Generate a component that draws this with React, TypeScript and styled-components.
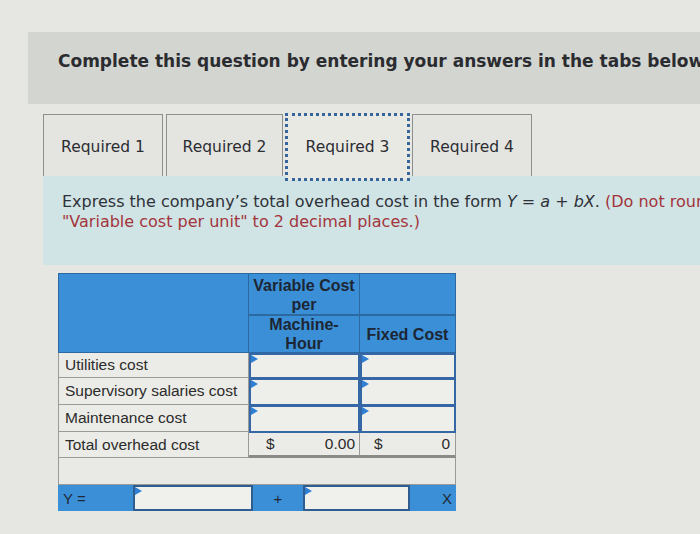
import React from "react";
import styled, { createGlobalStyle, css } from "styled-components";

const Global = createGlobalStyle`
  html, body {
    margin: 0;
    padding: 0;
    width: 700px;
    height: 534px;
    overflow: hidden;
    background: #e6e7e2;
  }
  * { box-sizing: border-box; }
`;

const Page = styled.div`
  padding: 32px 0 0 28px;
  width: 700px;
  height: 534px;
  overflow: hidden;
`;

const Banner = styled.div`
  height: 72px;
  background: #d3d5d0;
  padding: 18px 0 0 30px;
  font-family: "DejaVu Sans", Verdana, sans-serif;
  font-weight: bold;
  font-size: 17px;
  line-height: 22px;
  color: #2b2c30;
  white-space: nowrap;
  overflow: hidden;
`;

const Content = styled.div`
  padding-left: 15px;
  margin-top: 10px;
`;

const TabRow = styled.div`
  display: flex;
  gap: 3px;
  align-items: stretch;
`;

const Tab = styled.div<{ $w: number; $active?: boolean }>`
  width: ${(p) => p.$w}px;
  height: 62px;
  border: 1px solid #8f908c;
  border-bottom: none;
  display: flex;
  align-items: center;
  justify-content: center;
  padding-top: 3px;
  font-family: "DejaVu Sans", Verdana, sans-serif;
  font-size: 15.5px;
  color: #2c2d33;
  background: #e4e5e0;
  position: relative;
  ${(p) =>
    p.$active &&
    css`
      border: none;
      background: #e9e9e4;
      outline: 3px dotted #35659a;
      outline-offset: -2px;
      margin-bottom: -4px;
      height: 66px;
      padding-bottom: 4px;
      z-index: 1;
    `}
`;

const Instructions = styled.div`
  height: 89px;
  background: #d0e4e5;
  padding: 16px 0 0 19px;
  font-family: "DejaVu Sans", Verdana, sans-serif;
  font-size: 16px;
  line-height: 20px;
  color: #2f3138;
  white-space: nowrap;
  overflow: hidden;
`;

const Note = styled.span`
  color: #a3343c;
`;

const Math = styled.i`
  font-style: italic;
`;

const TableWrap = styled.div`
  margin: 8px 0 0 15px;
  width: 398px;
  font-family: "Liberation Sans", Arial, sans-serif;
  font-size: 15.5px;
  color: #2b2b2b;
`;

const Grid = styled.div`
  display: grid;
  grid-template-columns: 191px 111px 96px;
  grid-template-rows: 42px 38px 25px 27px 27px 26px 27px;
`;

const HeadCell = styled.div<{ $span?: boolean; $top?: boolean }>`
  background: #3b8fd6;
  border-right: 1px solid #2d69a1;
  border-bottom: 1px solid #2d69a1;
  ${(p) => p.$span && css`grid-row: span 2; border-left: 1px solid #2d69a1;`}
  border-top: 1px solid #2d69a1;
  font-weight: bold;
  font-size: 16px;
  line-height: 19px;
  color: #1c2634;
  text-align: center;
  display: flex;
  flex-direction: column;
  justify-content: ${(p) => (p.$top ? "flex-start" : "center")};
  padding-top: ${(p) => (p.$top ? "2px" : "0")};
`;

const LabelCell = styled.div`
  background: #ebebe7;
  border-left: 1px solid #9a9b97;
  border-right: 1px solid #9a9b97;
  border-bottom: 1px solid #9a9b97;
  padding-left: 6px;
  display: flex;
  align-items: center;
  white-space: nowrap;
  overflow: hidden;
`;

const EntryCell = styled.div`
  position: relative;
  background: #eeeeeb;
  border: 2px solid #3566a6;
  margin-bottom: -1px;
`;

const Flag = styled.span`
  position: absolute;
  left: 0;
  top: 0;
  width: 0;
  height: 0;
  border-top: 4px solid transparent;
  border-bottom: 4px solid transparent;
  border-left: 7px solid #2f7fd2;
`;

const TotalCell = styled.div<{ $padL: number; $padR: number }>`
  background: #ebebe7;
  border-right: 1px solid #9a9b97;
  border-bottom: 3px solid #8a8b87;
  display: flex;
  align-items: center;
  justify-content: space-between;
  padding: 0 ${(p) => p.$padR}px 0 ${(p) => p.$padL}px;
`;

const BlankRow = styled.div`
  grid-column: span 3;
  background: #e9e9e5;
  border-left: 1px solid #9a9b97;
  border-right: 1px solid #9a9b97;
  border-bottom: 1px solid #9a9b97;
`;

const FormulaRow = styled.div`
  display: flex;
  height: 26px;
`;

const FormulaCell = styled.div<{ $w: number; $align: string; $pad: number }>`
  width: ${(p) => p.$w}px;
  background: #3b8fd6;
  display: flex;
  align-items: center;
  justify-content: ${(p) => p.$align};
  padding: 0 ${(p) => p.$pad}px;
  color: #1f2a38;
  font-size: 15px;
`;

const FormulaInput = styled.div<{ $w: number }>`
  position: relative;
  width: ${(p) => p.$w}px;
  background: #f0f0ed;
  border: 2px solid #2f5d8f;
`;

export default function App() {
  return (
    <>
      <Global />
      <Page>
        <Banner>Complete this question by entering your answers in the tabs below.</Banner>
        <Content>
          <TabRow>
            <Tab $w={120}>Required 1</Tab>
            <Tab $w={117}>Required 2</Tab>
            <Tab $w={123} $active>
              Required 3
            </Tab>
            <Tab $w={120}>Required 4</Tab>
          </TabRow>
          <Instructions>
            Express the company’s total overhead cost in the form <Math>Y</Math> = <Math>a</Math> + <Math>bX</Math>.{" "}
            <Note>(Do not round intermediate calculations. Round your</Note>
            <br />
            <Note>"Variable cost per unit" to 2 decimal places.)</Note>
          </Instructions>
          <TableWrap>
            <Grid>
              <HeadCell $span />
              <HeadCell $top>
                <span>Variable Cost</span>
                <span>per</span>
              </HeadCell>
              <HeadCell />
              <HeadCell>
                <span>Machine-</span>
                <span>Hour</span>
              </HeadCell>
              <HeadCell>Fixed Cost</HeadCell>

              <LabelCell>Utilities cost</LabelCell>
              <EntryCell><Flag /></EntryCell>
              <EntryCell><Flag /></EntryCell>

              <LabelCell>Supervisory salaries cost</LabelCell>
              <EntryCell><Flag /></EntryCell>
              <EntryCell><Flag /></EntryCell>

              <LabelCell>Maintenance cost</LabelCell>
              <EntryCell><Flag /></EntryCell>
              <EntryCell><Flag /></EntryCell>

              <LabelCell>Total overhead cost</LabelCell>
              <TotalCell $padL={17} $padR={4}>
                <span>$</span>
                <span>0.00</span>
              </TotalCell>
              <TotalCell $padL={14} $padR={5}>
                <span>$</span>
                <span>0</span>
              </TotalCell>

              <BlankRow />
            </Grid>
            <FormulaRow>
              <FormulaCell $w={75} $align="flex-start" $pad={5}>Y =</FormulaCell>
              <FormulaInput $w={120}><Flag /></FormulaInput>
              <FormulaCell $w={50} $align="center" $pad={0}>+</FormulaCell>
              <FormulaInput $w={107}><Flag /></FormulaInput>
              <FormulaCell $w={46} $align="flex-end" $pad={4}>X</FormulaCell>
            </FormulaRow>
          </TableWrap>
        </Content>
      </Page>
    </>
  );
}
